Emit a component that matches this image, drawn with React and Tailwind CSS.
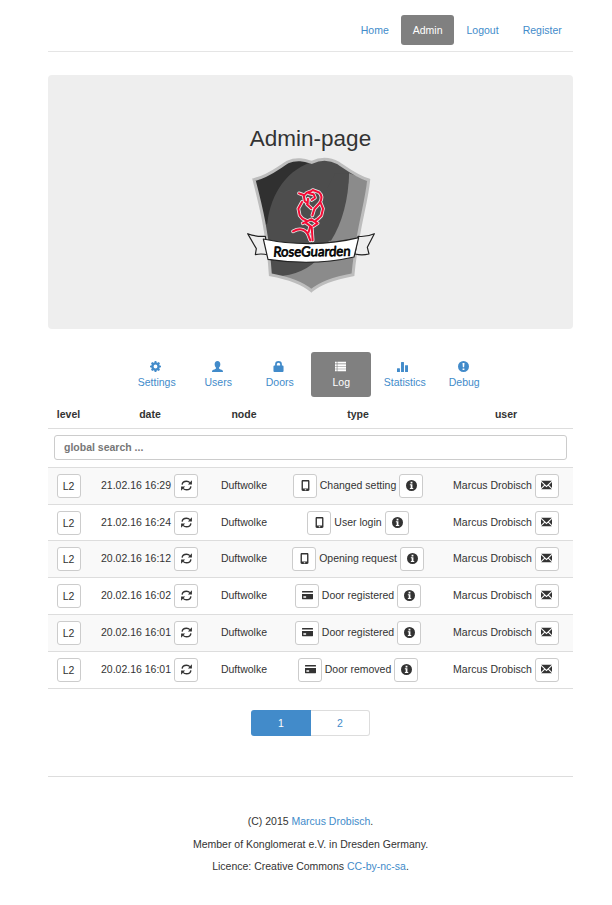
import React from "react";

function Icon({ name, className = "" }) {
  return (
    <svg
      viewBox="0 0 12 12"
      className={"inline-block h-[11px] w-[11px] shrink-0 " + className}
      fill="currentColor"
    >
      {ICONS[name]}
    </svg>
  );
}

const ICONS = {
  cog: (
    <path
      fillRule="evenodd"
      d="M5.1 0h1.8l.3 1.5 1 .4L9.500 1 10.900 2.400 10.100 3.800l.4 1L12 5.100v1.800l-1.500.3-.4 1 .8 1.400L9.500 11l-1.300-.9-1 .4L6.900 12H5.100l-.3-1.500-1-.4L2.500 11 1.100 9.600l.8-1.400-.4-1L0 6.900V5.100l1.500-.3.4-1L1.100 2.400 2.500 1l1.300.9 1-.4zM6 3.900A2.100 2.100 0 1 0 6 8.100 2.100 2.100 0 1 0 6 3.900z"
    />
  ),
  user: (
    <path d="M6 0C8 0 9.100 1.400 9.100 3.500c0 1.500-.6 2.800-1.400 3.600v1c0 .5 1.200.8 2.700 1.400C11.500 9.900 12 10.600 12 12H0c0-1.400.5-2.100 1.600-2.500C3.100 8.900 4.300 8.600 4.300 8.100v-1C3.500 6.300 2.900 5 2.900 3.500 2.900 1.400 4 0 6 0z" />
  ),
  lock: (
    <path
      fillRule="evenodd"
      d="M2.300 5V3.600a3.700 3.600 0 0 1 7.400 0V5h.8c.6 0 1 .4 1 1v5c0 .6-.4 1-1 1h-9c-.6 0-1-.4-1-1V6c0-.6.4-1 1-1zM4.200 5h3.600V3.600a1.800 1.700 0 0 0-3.600 0z"
    />
  ),
  list: (
    <path d="M0 .7h1.900v2.100H0zM2.600.7H12v2.100H2.600zM0 3.500h1.900v2.100H0zM2.600 3.500H12v2.100H2.600zM0 6.300h1.900v2.100H0zM2.600 6.300H12v2.100H2.600zM0 9.100h1.900v2.100H0zM2.600 9.100H12v2.100H2.600z" />
  ),
  stats: (
    <path d="M.5 8h2.200c.3 0 .5.2.5.5V12H0V8.500c0-.3.200-.5.500-.5zM5 1h2c.4 0 .6.2.6.5V12H4.400V1.500c0-.3.200-.5.600-.5zM9.300 4.500h2.200c.3 0 .5.200.5.500v7H8.800V5c0-.3.200-.5.500-.5z" />
  ),
  alert: (
    <path
      fillRule="evenodd"
      d="M6 0a6 6 0 1 1 0 12A6 6 0 0 1 6 0zM4.900 2.200l.4 4.700h1.400l.4-4.700zM5 8.100v1.700h2V8.100z"
    />
  ),
  refresh: (
    <g>
      <path
        d="M1.200 5.100C1.500 2.700 3.500 1.300 6 1.300c1.500 0 2.800.6 3.700 1.600M10.800 6.900C10.500 9.300 8.500 10.700 6 10.700c-1.500 0-2.800-.6-3.700-1.600"
        fill="none"
        stroke="currentColor"
        strokeWidth="1.500"
      />
      <path d="M11.900.4v4.600H7.500zM.1 11.600V7h4.400z" />
    </g>
  ),
  phone: (
    <path
      fillRule="evenodd"
      d="M3.100 0h5.800c.8 0 1.400.5 1.400 1.300v9.400c0 .8-.6 1.300-1.400 1.300H3.100c-.8 0-1.400-.5-1.400-1.300V1.300C1.700.5 2.300 0 3.100 0zM3.200 1.700v7.500h5.600V1.700zM5.200 10.100v1h1.600v-1z"
    />
  ),
  info: (
    <path
      fillRule="evenodd"
      d="M6 0a6 6 0 1 1 0 12A6 6 0 0 1 6 0zM5 2v1.700h2V2zM4.200 4.700v1h.9v3h-.9v1h3.700v-1H7v-4z"
    />
  ),
  card: (
    <path
      fillRule="evenodd"
      d="M.5 1.100h11c.3 0 .5.200.5.500v1.200H0V1.600c0-.3.200-.5.500-.5zM0 4.300h12v5.300c0 .3-.2.500-.5.500H.5c-.3 0-.5-.2-.5-.5zM1.500 6.900v1.600h3V6.900z"
    />
  ),
  mail: (
    <path d="M.2.800h11.600L6 6.200zM0 2.200l3.400 3.200L0 8.600zM12 2.200v6.400L8.600 5.400zM4.200 6.200 6 7.800l1.800-1.600 4 4H.2z" />
  ),
};

const NAV = ["Home", "Admin", "Logout", "Register"];

const TABS = [
  ["cog", "Settings"],
  ["user", "Users"],
  ["lock", "Doors"],
  ["list", "Log"],
  ["stats", "Statistics"],
  ["alert", "Debug"],
];

const ROWS = [
  ["21.02.16 16:29", "phone", "Changed setting"],
  ["21.02.16 16:24", "phone", "User login"],
  ["20.02.16 16:12", "phone", "Opening request"],
  ["20.02.16 16:02", "card", "Door registered"],
  ["20.02.16 16:01", "card", "Door registered"],
  ["20.02.16 16:01", "card", "Door removed"],
];

function Button({ children }) {
  return (
    <button className="flex h-6 w-6 shrink-0 items-center justify-center rounded-[3px] border border-[#ccc] bg-white">
      {children}
    </button>
  );
}

function Label({ children }) {
  return <span className="-mt-[2px] whitespace-nowrap">{children}</span>;
}

const SHIELD =
  "M57 179C100 169 130 143 158 126C185 114 208 120 230 127C255 115 285 115 310 129C338 148 365 169 401 180C394 255 366 330 354 464C310 472 260 485 229 512C198 485 150 472 106 464C98 340 78 260 57 179Z";

const ROSE =
  "M192 220L206 225L209 243L218 250L219 236M210 224C216 212 228 218 233 210L252 217C262 226 261 238 254 249L238 267L232 286M222 220L236 223L240 233L230 240M216 253L229 265M201 246L190 266L194 286L202 296L214 302M256 246L264 266L259 287L250 296L243 301M203 310L229 298L248 310L236 318M212 308L226 318L221 336M230 320L233 361M174 334C192 324 209 327 218 341L226 361";

function Logo() {
  return (
    <svg viewBox="36 108 384 414" className="h-[138px] w-[128px]">
      <defs>
        <clipPath id="shield">
          <path d={SHIELD} />
        </clipPath>
      </defs>
      <g clipPath="url(#shield)">
        <rect x="50" y="108" width="360" height="410" fill="#4d4d4d" />
        <path d="M40 108H240V123C160 145 108 215 97 310L80 330L40 190Z" fill="#303030" />
        <path d="M342 160L415 184L354 518H100V467C165 475 222 450 254 411C303 335 338 250 342 160Z" fill="#8b8b8b" />
        <path d="M342 160C341 235 322 310 288 362L200 362L300 160Z" fill="#4d4d4d" />
      </g>
      <path d={SHIELD} fill="none" stroke="#bdbdbd" strokeWidth="9" />
      <g fill="none" strokeLinecap="round" strokeLinejoin="round">
        <path d={ROSE} stroke="#e8e8e8" strokeWidth="11" />
        <path d={ROSE} stroke="#f50b35" strokeWidth="6" />
      </g>
      <g stroke="#222" strokeWidth="3.500" strokeLinejoin="round">
        <path d="M38 341C58 349 73 350 91 349L100 405C85 401 73 401 61 404L64 386Z" fill="#eee" />
        <path d="M418 341C400 349 386 351 369 349L360 402C376 406 389 405 402 402L397 382Z" fill="#eee" />
        <path d="M85 357C175 376 280 376 371 353L357 411C278 429 185 431 99 418Z" fill="#fff" />
      </g>
      <text
        x="0"
        y="0"
        transform="translate(114 410) rotate(-0.500) skewX(-5)"
        textLength="232"
        lengthAdjust="spacingAndGlyphs"
        className="font-['Lato',sans-serif] text-[42px] font-normal"
        fill="#000"
        stroke="#000"
        strokeWidth="2.200"
        strokeLinejoin="round"
      >
        RoseGuarden
      </text>
    </svg>
  );
}

export default function App() {
  return (
    <div className="h-[905px] w-[612px] bg-white pr-[39px] pl-12 font-['Liberation_Sans',Arial,sans-serif] text-[10.5px] leading-[15px] text-[#333]">
      <header className="flex h-[52px] justify-end gap-[1.500px] border-b border-[#e5e5e5] pt-[15px]">
        {NAV.map((n) => (
          <a
            key={n}
            className={
              "h-[30px] rounded-[3px] py-[7.5px] " +
              (n === "Admin"
                ? "-ml-[0.75px] bg-[#808080] pr-[11.25px] pl-3 text-white"
                : "px-[11.25px] text-[#428bca]")
            }
          >
            {n}
          </a>
        ))}
      </header>

      <section className="mt-[23px] flex h-[254px] flex-col items-center rounded-[4px] bg-[#eee] pt-[51px]">
        <h1 className="text-[22.5px] leading-[25px]">Admin-page</h1>
        <div className="mt-[5px]">
          <Logo />
        </div>
      </section>

      <nav className="mt-[23px] flex h-[45px] justify-center gap-[1.500px]">
        {TABS.map(([icon, label]) => (
          <a
            key={label}
            className={
              "flex w-[60px] flex-col items-center rounded-[3px] pt-[9px] " +
              (label === "Log" ? "bg-[#808080] text-white" : "text-[#428bca]") +
              (label === "Statistics" ? " pl-1" : "")
            }
          >
            <Icon
              name={icon}
              className={label === "Statistics" ? "mr-[5px]" : "mr-[2px]"}
            />
            <span className="mt-[2.5px]">{label}</span>
          </a>
        ))}
      </nav>

      <div>
        <div className="grid h-[31px] grid-cols-[41px_122px_66px_162px_134px] pt-[10px] text-center font-bold">
          <span>level</span>
          <span>date</span>
          <span>node</span>
          <span>type</span>
          <span>user</span>
        </div>
        <div className="h-[39px] border-t border-[#ddd] px-[6px] pt-[6px]">
          <input
            placeholder="global search ..."
            className="block h-[25px] w-full rounded-[3px] border border-[#ccc] px-[9px] pb-[1px] font-bold outline-none placeholder:text-[#777]"
          />
        </div>
        <div className="border-b border-[#ddd]">
          {ROWS.map(([date, icon, type], i) => (
            <div
              key={i}
              className={
                "grid grid-cols-[41px_122px_66px_162px_134px] items-start border-t border-[#ddd] pt-[6px] " +
                (i === 1 ? "h-9 " : "h-[37px] ") +
                (i % 2 === 0 ? "bg-[#f9f9f9]" : "")
              }
            >
              <div className="flex justify-center">
                <Button>L2</Button>
              </div>
              <div className="flex items-center justify-center gap-[3px] pr-[1px]">
                <Label>{date}</Label>
                <Button>
                  <Icon name="refresh" className="-mt-[2px] ml-[1px]" />
                </Button>
              </div>
              <div className="flex h-6 items-center justify-center">
                <Label>Duftwolke</Label>
              </div>
              <div className="flex items-center justify-center gap-[3px]">
                <Button>
                  <Icon name={icon} className="-mt-[2px] ml-[1px]" />
                </Button>
                <Label>{type}</Label>
                <Button>
                  <Icon name="info" className="-mt-[2px] ml-[1px]" />
                </Button>
              </div>
              <div className="flex items-center justify-center gap-[3px]">
                <Label>Marcus Drobisch</Label>
                <Button>
                  <Icon name="mail" className="-mt-[2px]" />
                </Button>
              </div>
            </div>
          ))}
        </div>
      </div>

      <div className="mt-[21px] flex h-[26px] justify-center text-center leading-[26px]">
        <a className="w-[60px] rounded-l-[3px] bg-[#428bca] text-white">1</a>
        <a className="w-[59px] rounded-r-[3px] border border-l-0 border-[#ddd] leading-6 text-[#428bca]">
          2
        </a>
      </div>

      <footer className="mt-10 border-t border-[#ddd] pt-[37px] text-center">
        <p className="mb-2">
          (C) 2015 <a className="text-[#428bca]">Marcus Drobisch</a>.
        </p>
        <p className="mb-[7px]">Member of Konglomerat e.V. in Dresden Germany.</p>
        <p>
          Licence: Creative Commons <a className="text-[#428bca]">CC-by-nc-sa</a>.
        </p>
      </footer>
    </div>
  );
}
